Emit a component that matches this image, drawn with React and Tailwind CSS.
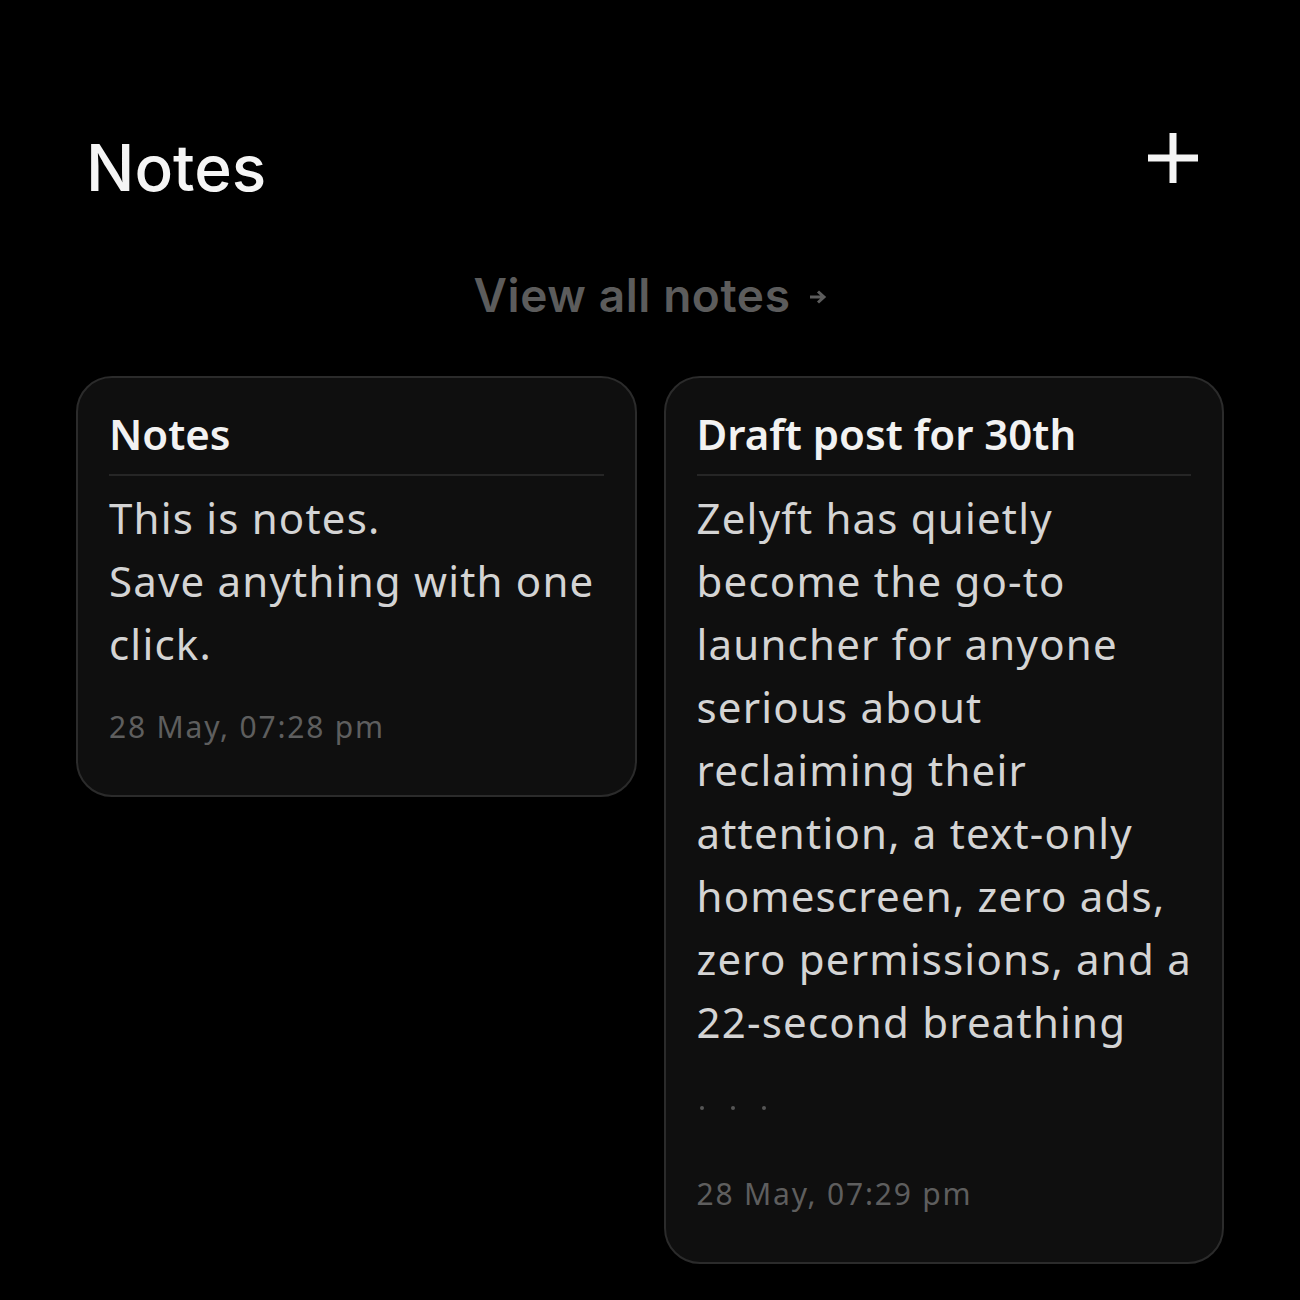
import React from 'react';

const body = { fontFamily: '"Noto Sans", "Open Sans", sans-serif' };
const head = { fontFamily: 'Inter, "Noto Sans", sans-serif' };

function PlusIcon() {
  return (
    <svg width="50" height="50" viewBox="0 0 50 50">
      <rect x="21.5" y="0" width="7" height="50" fill="#f5f5f5" />
      <rect x="0" y="21.5" width="50" height="7" fill="#f5f5f5" />
    </svg>
  );
}

function NoteCard({ title, lines, more, date }) {
  return (
    <div className="rounded-[36px] border-2 border-[#2b2b2b] bg-[#0f0f0f] px-[31px] pt-[28px] pb-[48px]" style={body}>
      <div className="text-[42px] font-semibold leading-[56px] text-[#f2f2f2]">{title}</div>
      <div className="mt-[12px] h-[2px] bg-[#262626]" />
      <div className="mt-[10px] text-[42px] leading-[63px] tracking-[1.2px] text-[#d4d4d4]">
        {lines.map((l, i) => (
          <div key={i} className="whitespace-nowrap">{l}</div>
        ))}
      </div>
      {more && (
        <div className="mt-[53px] flex gap-[27px] pl-[3px]">
          <span className="h-[4px] w-[4px] rounded-full bg-[#555]" />
          <span className="h-[4px] w-[4px] rounded-full bg-[#555]" />
          <span className="h-[4px] w-[4px] rounded-full bg-[#555]" />
        </div>
      )}
      <div className={`${more ? 'mt-[64px]' : 'mt-[32px]'} text-[30px] leading-[40px] tracking-[1.8px] text-[#5e5e5e]`}>{date}</div>
    </div>
  );
}

export default function App() {
  return (
    <div className="min-h-[1300px] w-[1300px] bg-black">
      <div className="flex items-start justify-between pl-[86px] pr-[102px] pt-[128px]">
        <h1 className="text-[64px] font-medium leading-[80px] text-[#f5f5f5]" style={head}>Notes</h1>
        <div className="pt-[5px]">
          <PlusIcon />
        </div>
      </div>

      <div className="mt-[59px] flex items-center justify-center gap-[18px] text-[#5c5c5c]" style={head}>
        <span className="text-[46px] font-semibold leading-[56px] tracking-[0.6px]">View all notes</span>
        <svg width="18" height="16" viewBox="0 0 18 16" className="mt-[4px]">
          <path d="M1 8 H15 M9 2.5 L15 8 L9 13.5" stroke="#5c5c5c" strokeWidth="3" fill="none" />
        </svg>
      </div>

      <div className="mt-[53px] grid grid-cols-2 items-start gap-[27px] px-[76px]">
        <NoteCard
          title="Notes"
          lines={['This is notes.', 'Save anything with one', 'click.']}
          date="28 May, 07:28 pm"
        />
        <NoteCard
          title="Draft post for 30th"
          lines={[
            'Zelyft has quietly',
            'become the go-to',
            'launcher for anyone',
            'serious about',
            'reclaiming their',
            'attention, a text-only',
            'homescreen, zero ads,',
            'zero permissions, and a',
            '22-second breathing',
          ]}
          more
          date="28 May, 07:29 pm"
        />
      </div>
    </div>
  );
}
